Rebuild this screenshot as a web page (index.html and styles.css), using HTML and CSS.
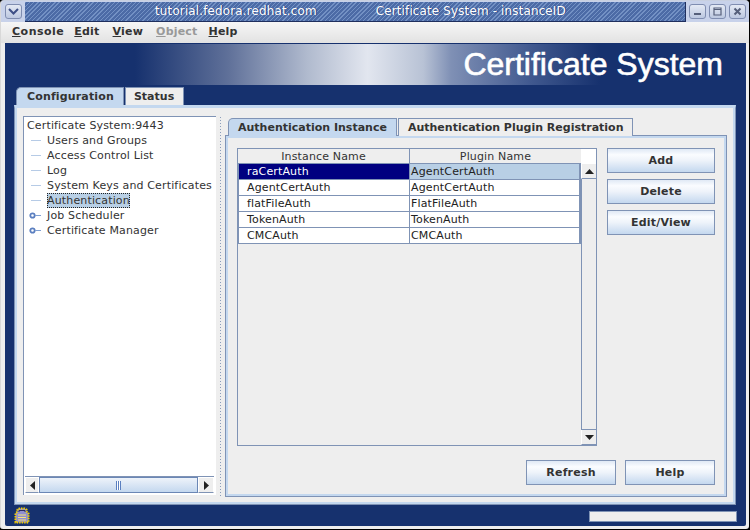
FILE: index.html
```html
<!DOCTYPE html>
<html>
<head>
<meta charset="utf-8">
<title>Certificate System - instanceID</title>
<link rel="stylesheet" href="styles.css">
</head>
<body>
<div class="window">
  <header class="titlebar">
    <button class="wm wm-menu"><svg width="11" height="7" viewBox="0 0 11 7"><path d="M1 1l4.500 4.500L10 1" fill="none" stroke="#3d4f86" stroke-width="2"/></svg></button>
    <div class="title-hatch">
      <span class="title-host">tutorial.fedora.redhat.com</span>
      <span class="title-name">Certificate System - instanceID</span>
    </div>
    <div class="wm-group">
      <button class="wm"><svg width="9" height="9" viewBox="0 0 9 9"><rect x="1" y="6" width="7" height="2" fill="#555f7a"/></svg></button>
      <button class="wm"><svg width="9" height="9" viewBox="0 0 9 9"><path d="M1 1h7v7H1z M1 2.500h7" fill="none" stroke="#555f7a" stroke-width="1.200"/></svg></button>
      <button class="wm"><svg width="9" height="9" viewBox="0 0 9 9"><path d="M1.500 1.500l6 6M7.500 1.500l-6 6" fill="none" stroke="#555f7a" stroke-width="2"/></svg></button>
    </div>
  </header>
  <nav class="menubar">
    <span class="menu first"><u>C</u>onsole</span>
    <span class="menu"><u>E</u>dit</span>
    <span class="menu"><u>V</u>iew</span>
    <span class="menu off"><u>O</u>bject</span>
    <span class="menu"><u>H</u>elp</span>
  </nav>
  <main class="desktop">
    <div class="banner"><div class="banner-glow"></div><h1 class="brand">Certificate System</h1></div>
    <div class="tabs outer-tabs">
      <span class="tab active">Configuration</span>
      <span class="tab">Status</span>
    </div>
    <section class="panel">
      <aside class="tree-pane">
        <div class="tree">
          <div class="tree-root">Certificate System:9443</div>
          <div class="node"><i class="dash"></i><span>Users and Groups</span></div>
          <div class="node"><i class="dash"></i><span>Access Control List</span></div>
          <div class="node"><i class="dash"></i><span>Log</span></div>
          <div class="node"><i class="dash"></i><span>System Keys and Certificates</span></div>
          <div class="node"><i class="dash"></i><span class="picked">Authentication</span></div>
          <div class="node"><svg class="handle" width="13" height="7" viewBox="0 0 13 7"><circle cx="3.500" cy="3.500" r="2.200" fill="#fff" stroke="#5b7fc0" stroke-width="1.800"/><path d="M6 3.500h6" stroke="#7f9fd2"/></svg><span>Job Scheduler</span></div>
          <div class="node"><svg class="handle" width="13" height="7" viewBox="0 0 13 7"><circle cx="3.500" cy="3.500" r="2.200" fill="#fff" stroke="#5b7fc0" stroke-width="1.800"/><path d="M6 3.500h6" stroke="#7f9fd2"/></svg><span>Certificate Manager</span></div>
        </div>
        <div class="hscroll">
          <span class="arrow-btn"><svg width="5" height="9" viewBox="0 0 5 9"><path d="M5 0v9L0 4.500z" fill="#222"/></svg></span>
          <span class="hthumb"><i></i></span>
          <span class="arrow-btn"><svg width="5" height="9" viewBox="0 0 5 9"><path d="M0 0v9l5-4.500z" fill="#222"/></svg></span>
        </div>
      </aside>
      <div class="splitter"></div>
      <div class="content">
        <div class="tabs inner-tabs">
          <span class="tab active">Authentication Instance</span>
          <span class="tab">Authentication Plugin Registration</span>
        </div>
        <div class="inner-panel">
          <div class="top-row">
            <div class="table-frame">
              <div class="table-side">
                <div class="thead"><span class="c1">Instance Name</span><span class="c2">Plugin Name</span></div>
                <div class="row selected"><span class="c1">raCertAuth</span><span class="c2">AgentCertAuth</span></div>
                <div class="row"><span class="c1">AgentCertAuth</span><span class="c2">AgentCertAuth</span></div>
                <div class="row"><span class="c1">flatFileAuth</span><span class="c2">FlatFileAuth</span></div>
                <div class="row"><span class="c1">TokenAuth</span><span class="c2">TokenAuth</span></div>
                <div class="row"><span class="c1">CMCAuth</span><span class="c2">CMCAuth</span></div>
              </div>
              <div class="vscroll">
                <span class="corner"></span>
                <span class="v-btn"><svg width="9" height="5" viewBox="0 0 9 5"><path d="M0 5h9L4.500 0z" fill="#222"/></svg></span>
                <span class="v-track"></span>
                <span class="v-btn"><svg width="9" height="5" viewBox="0 0 9 5"><path d="M0 0h9L4.500 5z" fill="#222"/></svg></span>
              </div>
            </div>
            <div class="side-actions">
              <button class="btn">Add</button>
              <button class="btn">Delete</button>
              <button class="btn">Edit/View</button>
            </div>
          </div>
          <div class="bottom-row">
            <button class="btn">Refresh</button>
            <button class="btn">Help</button>
          </div>
        </div>
      </div>
    </section>
    <footer class="statusbar">
      <svg class="lock" width="16" height="17" viewBox="0 0 16 17"><path d="M1.500 15.500v-9l2-2v-2l2-1h5l2 1v2l2 2v9z" fill="#8f8fd0" stroke="#f5d000" stroke-width="2" stroke-dasharray="1.500 1"/><path d="M4 8h8M4 10.500h8M4 13h8" stroke="#f7e27a" stroke-width="1.200"/><path d="M5 5V3.500h6V5" fill="none" stroke="#2a2a60"/></svg>
      <div class="progress"></div>
    </footer>
  </main>
</div>
</body>
</html>
```
FILE: styles.css
```css
* { box-sizing: border-box; }
html, body { margin: 0; padding: 0; }
body { width: 750px; height: 530px; overflow: hidden; background: #000; font-family: "DejaVu Sans", sans-serif; font-size: 11px; letter-spacing: 0.15px; color: #222; }
.window { width: 749px; height: 529px; background: #eeeeee; border-left: 1px solid #d8d8d8; border-top: 1px solid #c8d0e0; border-radius: 4px 4px 3px 3px; overflow: hidden; display: flex; flex-direction: column; }

.titlebar { height: 21px; flex: none; display: flex; background: #c8d2ea; align-items: flex-start; }
.wm { width: 17px; height: 15px; padding: 0; border: 1px solid #7f8db0; border-radius: 3px; background: linear-gradient(#e4e9f4, #bcc8e0); display: flex; align-items: center; justify-content: center; }
.wm-menu { margin: 3px 3px 0 4px; }
.title-hatch { flex: 1; height: 20px; margin-top: 1px; border-bottom: 1px solid #1f2f5e; border-right: 1px solid #1f2f5e; display: flex; color: #fff; font-size: 12px; line-height: 19px; letter-spacing: 0.12px; background-color: #5474ae; background-image: repeating-linear-gradient(135deg, #7391c4 0 1px, #4c6ba6 1px 3px); text-shadow: 1px 0 0 #2c4480; }
.title-host { margin-left: 130px; }
.title-name { margin-left: 59px; }
.wm-group { display: flex; gap: 3px; padding: 3px 3px 0 3px; }

.menubar { height: 21px; flex: none; display: flex; gap: 13px; padding: 2px 0 0 11px; background: linear-gradient(#f6f6f6, #e2e2e2); font-weight: bold; color: #333; letter-spacing: 0.2px; line-height: 16px; }
.menu.first { letter-spacing: 0.5px; margin-right: -3px; }
.menu.off { color: #999; margin-right: -2px; }

.desktop { flex: 1; margin: 0 3px 3px 4px; background: #16316e; display: flex; flex-direction: column; border-radius: 0 0 2px 2px; }
.banner { height: 44px; flex: none; display: flex; position: relative; justify-content: flex-end; padding-top: 1px; background: #16316e; }
.banner-glow { position: absolute; left: 130px; top: 1px; width: 465px; height: 41px; background: linear-gradient(90deg, #16316e 0%, #5f7099 20%, #b0bace 37%, #e2e6ef 50%, #b8c2d5 62%, #7f90b5 68%, #41598f 85%, #16316e 100%); }
.brand { position: relative; margin: 2px 23px 0 0; font: normal 32px/36px "Liberation Sans", sans-serif; color: #fff; -webkit-text-stroke: 0.6px #fff; letter-spacing: 0; }

.tabs { display: flex; flex: none; font-weight: bold; letter-spacing: 0; }
.tab { display: block; border: 1px solid #7f93b5; border-bottom: 0; background: #eeeeee; color: #333; line-height: 15px; position: relative; }
.tab.active { background: #c4d8ef; border-radius: 5px 0 0 0; z-index: 1; }
.outer-tabs { height: 18px; padding-left: 11px; gap: 1px; }
.outer-tabs .tab { padding: 1px 9px 0 10px; letter-spacing: 0.15px; }
.outer-tabs .tab + .tab { padding: 1px 9px 0 8px; letter-spacing: 0; }
.inner-tabs { height: 18px; padding-left: 3px; margin-bottom: -1px; gap: 1px; }
.inner-tabs .tab { padding: 1px 9px 0; }

.panel { flex: none; height: 400px; margin-left: 9px; width: 722px; display: flex; background: #eeeeee; border: 1px solid #7f93b5; border-top: 3px solid #c4d8ef; box-shadow: inset -2px 0 0 #c4d8ef, inset 2px 0 0 #c4d8ef, inset 0 -2px 0 #c4d8ef; padding: 8px 8px 7px 8px; }
.tree-pane { width: 193px; flex: none; margin-bottom: 2px; border: 1px solid #7f93b5; border-right: 0; border-bottom: 0; display: flex; flex-direction: column; background: #fff; }
.tree { flex: 1; padding: 1px 0 0 3px; line-height: 15px; color: #333; background: #fff; }
.tree-root { height: 15px; }
.node { height: 15px; display: flex; align-items: center; white-space: nowrap; }
.dash { display: block; flex: none; width: 10px; height: 1px; margin: 0 6px 0 4px; background: #b6cbe6; }
.node .picked { background: #b8cfe5; outline: 1px dotted #222; outline-offset: -1px; }
.handle { flex: none; margin: 0 5px 0 2px; }
.hscroll { height: 17px; flex: none; margin: 0 2px 2px 1px; display: flex; border-top: 1px solid #7f93b5; background: #eee; }
.arrow-btn { width: 14px; flex: none; display: flex; align-items: center; justify-content: center; border: 1px solid #fff; border-bottom-color: #7f93b5; }
.arrow-btn:last-child { width: 16px; }
.hthumb { flex: 1; border: 1px solid #6b87b5; background: linear-gradient(#eef3fa, #c4d8ef); display: flex; align-items: center; justify-content: center; }
.hthumb i { display: block; width: 5px; height: 9px; background: repeating-linear-gradient(90deg, #5a7fc0 0 1px, #fff 1px 2px); }

.splitter { width: 9px; flex: none; background: radial-gradient(circle, #8a9cba 0.7px, transparent 1px) 3px 0 / 3px 3px repeat-y; }
.content { flex: 1; min-width: 0; display: flex; flex-direction: column; margin-top: 2px; }
.inner-panel { flex: 1; border: 1px solid #7f93b5; padding: 12px 11px 11px 11px; display: flex; flex-direction: column; justify-content: space-between; box-shadow: inset 0 2px 0 #c4d8ef, inset 2px 0 0 #c4d8ef, inset -2px 0 0 #c4d8ef, inset 0 -2px 0 #c4d8ef; }
.top-row { display: flex; gap: 10px; }
.table-frame { width: 360px; height: 298px; flex: none; display: flex; border: 1px solid #7f93b5; background: #eeeeee; }
.table-side { width: 343px; flex: none; }
.thead { display: flex; height: 14px; background: #eeeeee; line-height: 16px; text-align: center; color: #333; }
.thead .c1 { width: 172px; padding: 0; border-right: 1px solid #7f93b5; }
.thead .c2 { padding: 0; border-left: 0; }
.row { display: flex; height: 16px; line-height: 16px; background: #fff; border-bottom: 1px solid #7f93b5; border-right: 2px solid #7f93b5; border-left: 1px solid #7f93b5; color: #222; }
.row.selected { border-top: 1px solid #7f93b5; height: 17px; }
.c1 { width: 170px; flex: none; padding-left: 8px; }
.c2 { flex: 1; padding-left: 1px; border-left: 1px solid #7f93b5; }
.row.selected .c1 { background: #000080; color: #fff; }
.row.selected .c2 { background: #b8cfe5; }
.vscroll { flex: 1; display: flex; flex-direction: column; }
.corner { height: 15px; background: #fff; flex: none; }
.v-btn { height: 15px; flex: none; display: flex; align-items: center; justify-content: center; background: #eee; border-bottom: 1px solid #7f93b5; border-left: 1px solid #fff; }
.v-track { flex: 1; background: #eee; border-bottom: 1px solid #7f93b5; border-left: 1px solid #7f93b5; }
.side-actions { display: flex; flex-direction: column; gap: 6px; }
.btn { width: 108px; height: 25px; padding: 0; border: 1px solid #7f93b5; background: linear-gradient(#e0e9f5 0, #fafcff 25%, #eef3fa 50%, #c4d8ef 100%); font: bold 11px "DejaVu Sans", sans-serif; color: #333; letter-spacing: 0.2px; }
.bottom-row { display: flex; justify-content: flex-end; gap: 9px; }
.bottom-row .btn { width: 90px; }

.statusbar { flex: 1; display: flex; align-items: center; justify-content: space-between; padding: 0 9px 0 9px; }
.lock { flex: none; }
.progress { width: 148px; height: 11px; margin-top: 1px; background: #eee; border: 1px solid #7f93b5; }
```
